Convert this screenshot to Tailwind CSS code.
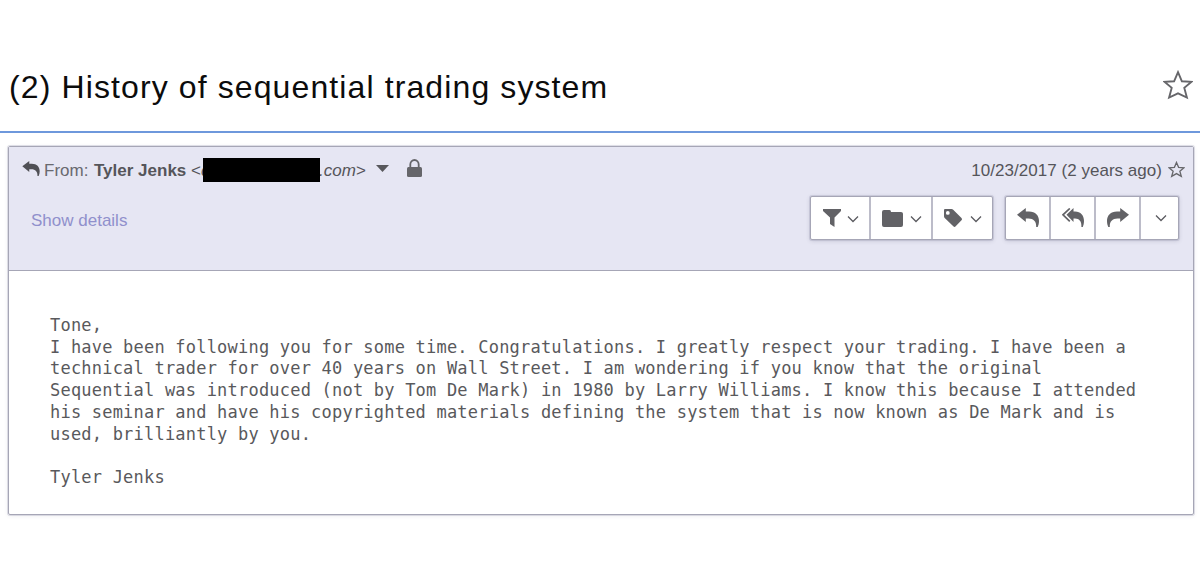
<!DOCTYPE html>
<html lang="en">
<head>
<meta charset="utf-8">
<title>History of sequential trading system</title>
<script src="https://cdn.jsdelivr.net/npm/@tailwindcss/browser@4"></script>
</head>
<body class="bg-white w-[1200px] h-[583px] overflow-hidden font-['Liberation_Sans',Arial,sans-serif] text-[#55555a]">
<svg class="hidden">
  <symbol id="reply" viewBox="0 0 22 19"><path d="M0 6.800 8.800 0v3.500H12C18.500 3.500 22 7.500 22 13c0 2.200-.5 4.200-1.300 6h-1.500c.3-5.600-2.700-8.500-7.700-8.500H8.800V14z"/></symbol>
  <symbol id="chev" viewBox="0 0 12 8"><path d="M1 1.500 6 6.500l5-5" fill="none" stroke="#5b5b60" stroke-width="1.300"/></symbol>
  <symbol id="star" viewBox="0 0 30 30"><path d="M15 2.200 18.900 11.300 28.300 11.900 21.300 17.900 23.900 27.500 15 23.400 6.100 27.500 8.700 17.900 1.700 11.900 11.100 11.300z" fill="none" stroke="#66666a" stroke-width="1.900"/></symbol>
</svg>
<header class="h-[133px] border-b-2 border-[#6e98dc] flex items-start justify-between pl-[9px] pr-[7px] pt-[68px]">
  <h1 class="text-[32px] leading-[38px] tracking-[1.110px] text-[#0c0c0c] whitespace-nowrap">(2) History of sequential trading system</h1>
  <svg class="w-[30px] h-[30px] mt-[2px]"><use href="#star"/></svg>
</header>
<main class="mt-[13px] ml-2 w-[1186px] h-[369px] border border-[#a6a6b6] rounded-[2px] shadow-[0_0_0_1px_rgba(150,150,175,0.28),0_1px_4px_rgba(60,60,90,0.1)] flex flex-col">
  <section class="h-[124px] shrink-0 bg-[#e6e6f3] border-b border-[#a6a6b6]">
    <div class="flex items-center h-[24px] mt-[11px] pl-[13px] pr-[8px] text-[17px] leading-[26px] whitespace-nowrap">
      <svg class="w-[18px] h-[15px] mt-[-3px] fill-[#505055]"><use href="#reply"/></svg>
      <span class="ml-1 mt-[2px] w-[50px] text-[#69696f]">From:</span>
      <b class="w-[97px] mt-[2px]">Tyler Jenks</b>
      <span class="w-[12px] mt-[2px]">&lt;<i>c</i></span>
      <span class="relative w-[117px] h-[24px] bg-black"></span>
      <i class="ml-[-1px] mt-[2px] w-[48px]">.com&gt;</i>
      <svg class="ml-[9px] mt-[-3px] w-[13px] h-[7px] fill-[#58585c]" viewBox="0 0 13 7"><path d="M0 0h13L6.500 7z"/></svg>
      <svg class="ml-[18px] mt-[-4px] w-[15px] h-[18px]" viewBox="0 0 15 18"><path d="M3.300 9V5.500a4.200 4.500 0 0 1 8.400 0V9" fill="none" stroke="#66666a" stroke-width="1.800"/><rect y="8" width="15" height="10" rx="1.500" fill="#66666a"/></svg>
      <span class="ml-auto mt-[2px] tracking-[0.03px]">10/23/2017 (2 years ago)</span>
      <svg class="ml-[6px] mt-[-1px] w-[17px] h-[17px]" viewBox="0 0 30 30"><path d="M15 2.500 18.700 11.200 28.200 11.900 20.900 17.900 23.500 27 15 22.200 6.500 27 9.100 17.900 1.800 11.900 11.300 11.200z" fill="none" stroke="#66666a" stroke-width="2.300"/></svg>
    </div>
    <div class="flex items-start justify-between pl-[22px] pr-[14px] mt-[14px]">
      <a class="mt-[13px] text-[17px] leading-6 text-[#9090cc]">Show details</a>
      <div class="flex gap-[12px]">
        <div class="flex h-[44px] border border-[#a6a6b6] rounded-[2px] bg-white divide-x-2 divide-[#bcbcc9] shadow-[0_0_0_1px_rgba(150,150,175,0.28),0_1px_4px_rgba(60,60,90,0.2)]">
          <div class="w-[60px] flex items-center pl-[12px]">
            <svg class="w-[18px] h-[18px] fill-[#626266]" viewBox="0 0 18 18"><path d="M0 0h18v2L11.500 8.500V18L7 15V8.500L0 2z"/></svg>
            <svg class="ml-[6px] mt-[2px] w-[12px] h-[8px]"><use href="#chev"/></svg>
          </div>
          <div class="w-[62px] flex items-center pl-[11px]">
            <svg class="w-[21px] h-[17px] fill-[#626266]" viewBox="0 0 21 18" preserveAspectRatio="none"><path d="M2 0h5.500Q9 0 9 2h10q2 0 2 2v12q0 2-2 2H2q-2 0-2-2V2Q0 0 2 0z"/></svg>
            <svg class="ml-[7px] mt-[2px] w-[12px] h-[8px]"><use href="#chev"/></svg>
          </div>
          <div class="w-[59px] flex items-center pl-[10px]">
            <svg class="w-[20px] h-[20px] fill-[#626266]" viewBox="0 0 20 20"><path fill-rule="evenodd" d="M2 1h6.500q1 0 1.700.7l8.300 8.200q1.200 1.200 0 2.400l-5.800 6q-1.200 1.200-2.400 0L1.700 10Q1 9.300 1 8.300V2q0-1 1-1zM4.800 3a1.900 1.900 0 1 0 0 3.800 1.900 1.900 0 0 0 0-3.800z"/></svg>
            <svg class="ml-[7px] mt-[2px] w-[12px] h-[8px]"><use href="#chev"/></svg>
          </div>
        </div>
        <div class="flex h-[44px] border border-[#a6a6b6] rounded-[2px] bg-white divide-x-2 divide-[#bcbcc9] shadow-[0_0_0_1px_rgba(150,150,175,0.28),0_1px_4px_rgba(60,60,90,0.2)]">
          <div class="w-[45px] flex items-center justify-center"><svg class="w-[22px] h-[19px] fill-[#626266] mt-[-2px]"><use href="#reply"/></svg></div>
          <div class="w-[45px] flex items-center justify-center"><svg class="w-[22px] h-[19px] fill-[#626266] mt-[-2px]" viewBox="0 0 22 19"><path d="M7.800.5 1 6.800l6.800 6.500" fill="none" stroke="#626266" stroke-width="1.700"/><path d="M4.500 6.800 11.500 0v3.500h1.500C18.700 3.500 22 7.500 22 13c0 2.200-.5 4.200-1.200 6h-1.400c.3-5.600-2-8.500-6.400-8.500h-1.500V14z"/></svg></div>
          <div class="w-[45px] flex items-center justify-center"><svg class="w-[22px] h-[19px] -scale-x-100 fill-[#626266] mt-[-2px]"><use href="#reply"/></svg></div>
          <div class="w-[37px] flex items-center justify-center pl-[2px]"><svg class="mt-[-1px] w-[12px] h-[8px]"><use href="#chev"/></svg></div>
        </div>
      </div>
    </div>
  </section>
  <pre class="pt-[44px] pl-[41px] font-['DejaVu_Sans_Mono',monospace] text-[17px] leading-[21.700px] tracking-[0.210px] text-[#59595c]">Tone,
I have been following you for some time. Congratulations. I greatly respect your trading. I have been a
technical trader for over 40 years on Wall Street. I am wondering if you know that the original
Sequential was introduced (not by Tom De Mark) in 1980 by Larry Williams. I know this because I attended
his seminar and have his copyrighted materials defining the system that is now known as De Mark and is
used, brilliantly by you.

Tyler Jenks</pre>
</main>
</body>
</html>
